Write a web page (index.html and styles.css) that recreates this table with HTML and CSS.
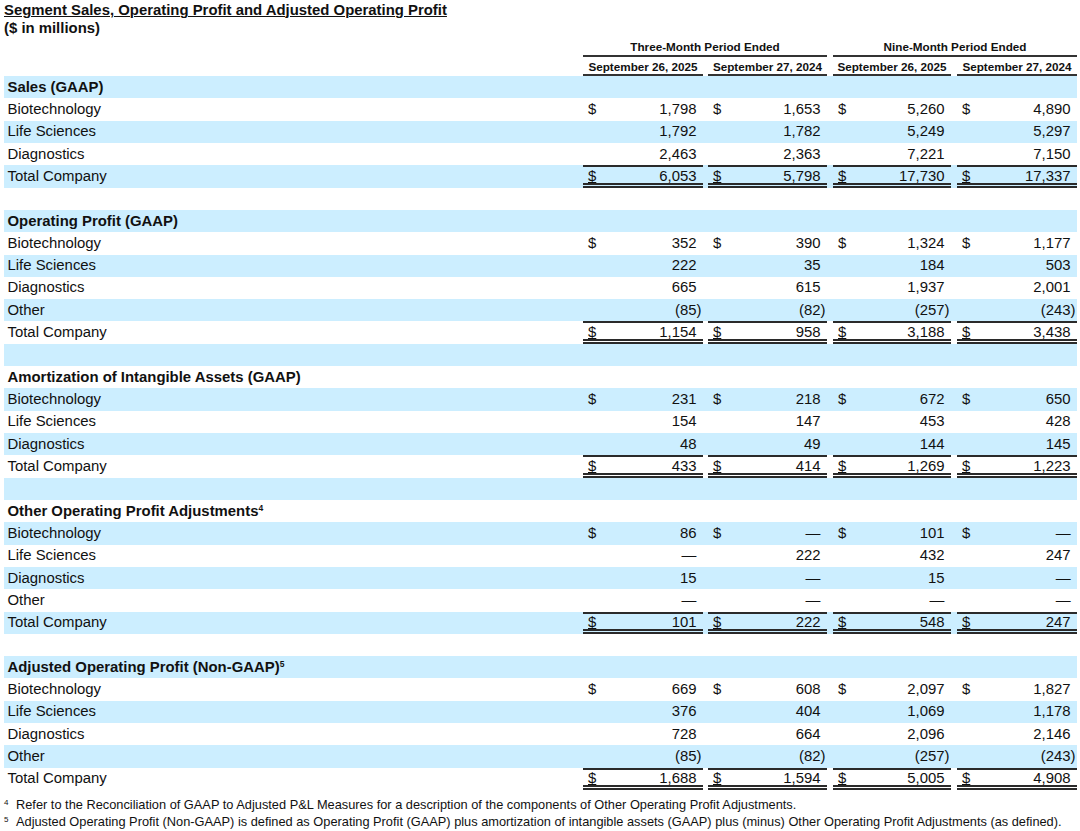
FILE: index.html
```html
<!DOCTYPE html>
<html lang="en">
<head>
<meta charset="utf-8">
<title>Segment Sales, Operating Profit and Adjusted Operating Profit</title>
<link rel="stylesheet" href="styles.css">
</head>
<body>
<div class="page">
  <div class="title">Segment Sales, Operating Profit and Adjusted Operating Profit</div>
  <div class="subtitle">($ in millions)</div>
  <table class="seg">
    <colgroup>
      <col class="c-label"><col class="c-d1"><col class="c-g1"><col class="c-d2"><col class="c-g2"><col class="c-d3"><col class="c-g3"><col class="c-d4">
    </colgroup>
    <thead>
      <tr class="h1">
        <th></th><th colspan="3" class="rule">Three-Month Period Ended</th><th></th><th colspan="3" class="rule">Nine-Month Period Ended</th>
      </tr>
      <tr class="h2">
        <th></th><th class="rule">September 26, 2025</th><th></th><th class="rule">September 27, 2024</th><th></th><th class="rule">September 26, 2025</th><th></th><th class="rule">September 27, 2024</th>
      </tr>
    </thead>
    <tbody>
      <tr><td class="lbl b">Sales (GAAP)</td><td></td><td></td><td></td><td></td><td></td><td></td><td></td></tr>
      <tr><td class="lbl">Biotechnology</td><td class="v"><span class="cur">$</span>1,798</td><td></td><td class="v"><span class="cur">$</span>1,653</td><td></td><td class="v"><span class="cur">$</span>5,260</td><td></td><td class="v"><span class="cur">$</span>4,890</td></tr>
      <tr><td class="lbl">Life Sciences</td><td class="v">1,792</td><td></td><td class="v">1,782</td><td></td><td class="v">5,249</td><td></td><td class="v">5,297</td></tr>
      <tr><td class="lbl">Diagnostics</td><td class="v">2,463</td><td></td><td class="v">2,363</td><td></td><td class="v">7,221</td><td></td><td class="v">7,150</td></tr>
      <tr class="tot"><td class="lbl">Total Company</td><td class="v"><span class="cur">$</span>6,053</td><td></td><td class="v"><span class="cur">$</span>5,798</td><td></td><td class="v"><span class="cur">$</span>17,730</td><td></td><td class="v"><span class="cur">$</span>17,337</td></tr>
      <tr><td class="lbl"></td><td></td><td></td><td></td><td></td><td></td><td></td><td></td></tr>

      <tr><td class="lbl b">Operating Profit (GAAP)</td><td></td><td></td><td></td><td></td><td></td><td></td><td></td></tr>
      <tr><td class="lbl">Biotechnology</td><td class="v"><span class="cur">$</span>352</td><td></td><td class="v"><span class="cur">$</span>390</td><td></td><td class="v"><span class="cur">$</span>1,324</td><td></td><td class="v"><span class="cur">$</span>1,177</td></tr>
      <tr><td class="lbl">Life Sciences</td><td class="v">222</td><td></td><td class="v">35</td><td></td><td class="v">184</td><td></td><td class="v">503</td></tr>
      <tr><td class="lbl">Diagnostics</td><td class="v">665</td><td></td><td class="v">615</td><td></td><td class="v">1,937</td><td></td><td class="v">2,001</td></tr>
      <tr><td class="lbl">Other</td><td class="v"><span class="neg">(85)</span></td><td></td><td class="v"><span class="neg">(82)</span></td><td></td><td class="v"><span class="neg">(257)</span></td><td></td><td class="v"><span class="neg">(243)</span></td></tr>
      <tr class="tot"><td class="lbl">Total Company</td><td class="v"><span class="cur">$</span>1,154</td><td></td><td class="v"><span class="cur">$</span>958</td><td></td><td class="v"><span class="cur">$</span>3,188</td><td></td><td class="v"><span class="cur">$</span>3,438</td></tr>
      <tr><td class="lbl"></td><td></td><td></td><td></td><td></td><td></td><td></td><td></td></tr>

      <tr><td class="lbl b">Amortization of Intangible Assets (GAAP)</td><td></td><td></td><td></td><td></td><td></td><td></td><td></td></tr>
      <tr><td class="lbl">Biotechnology</td><td class="v"><span class="cur">$</span>231</td><td></td><td class="v"><span class="cur">$</span>218</td><td></td><td class="v"><span class="cur">$</span>672</td><td></td><td class="v"><span class="cur">$</span>650</td></tr>
      <tr><td class="lbl">Life Sciences</td><td class="v">154</td><td></td><td class="v">147</td><td></td><td class="v">453</td><td></td><td class="v">428</td></tr>
      <tr><td class="lbl">Diagnostics</td><td class="v">48</td><td></td><td class="v">49</td><td></td><td class="v">144</td><td></td><td class="v">145</td></tr>
      <tr class="tot"><td class="lbl">Total Company</td><td class="v"><span class="cur">$</span>433</td><td></td><td class="v"><span class="cur">$</span>414</td><td></td><td class="v"><span class="cur">$</span>1,269</td><td></td><td class="v"><span class="cur">$</span>1,223</td></tr>
      <tr><td class="lbl"></td><td></td><td></td><td></td><td></td><td></td><td></td><td></td></tr>

      <tr><td class="lbl b">Other Operating Profit Adjustments<sup class="fnref">4</sup></td><td></td><td></td><td></td><td></td><td></td><td></td><td></td></tr>
      <tr><td class="lbl">Biotechnology</td><td class="v"><span class="cur">$</span>86</td><td></td><td class="v"><span class="cur">$</span>—</td><td></td><td class="v"><span class="cur">$</span>101</td><td></td><td class="v"><span class="cur">$</span>—</td></tr>
      <tr><td class="lbl">Life Sciences</td><td class="v">—</td><td></td><td class="v">222</td><td></td><td class="v">432</td><td></td><td class="v">247</td></tr>
      <tr><td class="lbl">Diagnostics</td><td class="v">15</td><td></td><td class="v">—</td><td></td><td class="v">15</td><td></td><td class="v">—</td></tr>
      <tr><td class="lbl">Other</td><td class="v">—</td><td></td><td class="v">—</td><td></td><td class="v">—</td><td></td><td class="v">—</td></tr>
      <tr class="tot"><td class="lbl">Total Company</td><td class="v"><span class="cur">$</span>101</td><td></td><td class="v"><span class="cur">$</span>222</td><td></td><td class="v"><span class="cur">$</span>548</td><td></td><td class="v"><span class="cur">$</span>247</td></tr>
      <tr><td class="lbl"></td><td></td><td></td><td></td><td></td><td></td><td></td><td></td></tr>

      <tr><td class="lbl b">Adjusted Operating Profit (Non-GAAP)<sup class="fnref">5</sup></td><td></td><td></td><td></td><td></td><td></td><td></td><td></td></tr>
      <tr><td class="lbl">Biotechnology</td><td class="v"><span class="cur">$</span>669</td><td></td><td class="v"><span class="cur">$</span>608</td><td></td><td class="v"><span class="cur">$</span>2,097</td><td></td><td class="v"><span class="cur">$</span>1,827</td></tr>
      <tr><td class="lbl">Life Sciences</td><td class="v">376</td><td></td><td class="v">404</td><td></td><td class="v">1,069</td><td></td><td class="v">1,178</td></tr>
      <tr><td class="lbl">Diagnostics</td><td class="v">728</td><td></td><td class="v">664</td><td></td><td class="v">2,096</td><td></td><td class="v">2,146</td></tr>
      <tr><td class="lbl">Other</td><td class="v"><span class="neg">(85)</span></td><td></td><td class="v"><span class="neg">(82)</span></td><td></td><td class="v"><span class="neg">(257)</span></td><td></td><td class="v"><span class="neg">(243)</span></td></tr>
      <tr class="tot"><td class="lbl">Total Company</td><td class="v"><span class="cur">$</span>1,688</td><td></td><td class="v"><span class="cur">$</span>1,594</td><td></td><td class="v"><span class="cur">$</span>5,005</td><td></td><td class="v"><span class="cur">$</span>4,908</td></tr>
    </tbody>
  </table>
  <div class="notes">
    <div class="fn"><sup class="fnum">4</sup><span>Refer to the Reconciliation of GAAP to Adjusted P&amp;L Measures for a description of the components of Other Operating Profit Adjustments.</span></div>
    <div class="fn"><sup class="fnum">5</sup><span>Adjusted Operating Profit (Non-GAAP) is defined as Operating Profit (GAAP) plus amortization of intangible assets (GAAP) plus (minus) Other Operating Profit Adjustments (as defined).</span></div>
  </div>
</div>
</body>
</html>
```

FILE: styles.css
```css
* { box-sizing: border-box; }

body {
  margin: 0;
  background: #ffffff;
  color: #111111;
  font-family: "Liberation Sans", Arial, Helvetica, sans-serif;
}

.page {
  padding: 1px 3px 0 4px;
}

.title {
  font-weight: 700;
  font-size: 14.9px;
  line-height: 18px;
  text-decoration: underline;
  text-decoration-thickness: 1px;
}

.subtitle {
  font-weight: 700;
  font-size: 14.9px;
  line-height: 18px;
}

.seg {
  border-collapse: separate;
  border-spacing: 0;
  table-layout: fixed;
  width: 1073px;
}

.c-label { width: 579px; }
.c-d1 { width: 120px; }
.c-g1 { width: 5px; }
.c-d2 { width: 119px; }
.c-g2 { width: 6px; }
.c-d3 { width: 118px; }
.c-g3 { width: 6px; }
.c-d4 { width: 120px; }

.seg th {
  padding: 0;
  font-size: 11.7px;
  font-weight: 700;
  line-height: 14px;
  text-align: center;
  vertical-align: bottom;
  white-space: nowrap;
}

.seg .h1 th { height: 20px; padding-bottom: 3px; }
.seg .h2 th { height: 19px; padding-bottom: 2.5px; }

.seg th.rule {
  background: linear-gradient(#333333, #333333) left bottom / 100% 2px no-repeat;
}

.seg tbody tr { height: 22.32px; }
.seg tbody tr:nth-child(odd) { background: #cceeff; }

.seg td {
  padding: 0;
  font-size: 14.9px;
  line-height: 17px;
  vertical-align: middle;
  white-space: nowrap;
}

.seg td.lbl { padding-left: 3.5px; }
.seg td.b { font-weight: 700; }

.seg td.v {
  padding: 0 6.5px 0 5px;
  text-align: right;
}

.cur { float: left; }
.neg { margin-right: -0.333em; }

.seg tr.tot td.v {
  background:
    linear-gradient(#2a2a2a, #2a2a2a) left top / 100% 2px no-repeat,
    linear-gradient(#2a2a2a, #2a2a2a) left bottom / 100% 2px no-repeat,
    linear-gradient(#2a2a2a, #2a2a2a) left calc(100% - 3px) / 100% 2px no-repeat;
}

.seg tr.tot .cur { text-decoration: underline; text-decoration-thickness: 1px; }

.fnref {
  font-size: 8.5px;
  line-height: 0;
  vertical-align: 5px;
}

.notes {
  margin-top: 6px;
  font-size: 12.8px;
  line-height: 17px;
}

.fn { white-space: nowrap; }

.fnum {
  display: inline-block;
  width: 12px;
  font-size: 8px;
  line-height: 0;
  vertical-align: 4px;
}
```
